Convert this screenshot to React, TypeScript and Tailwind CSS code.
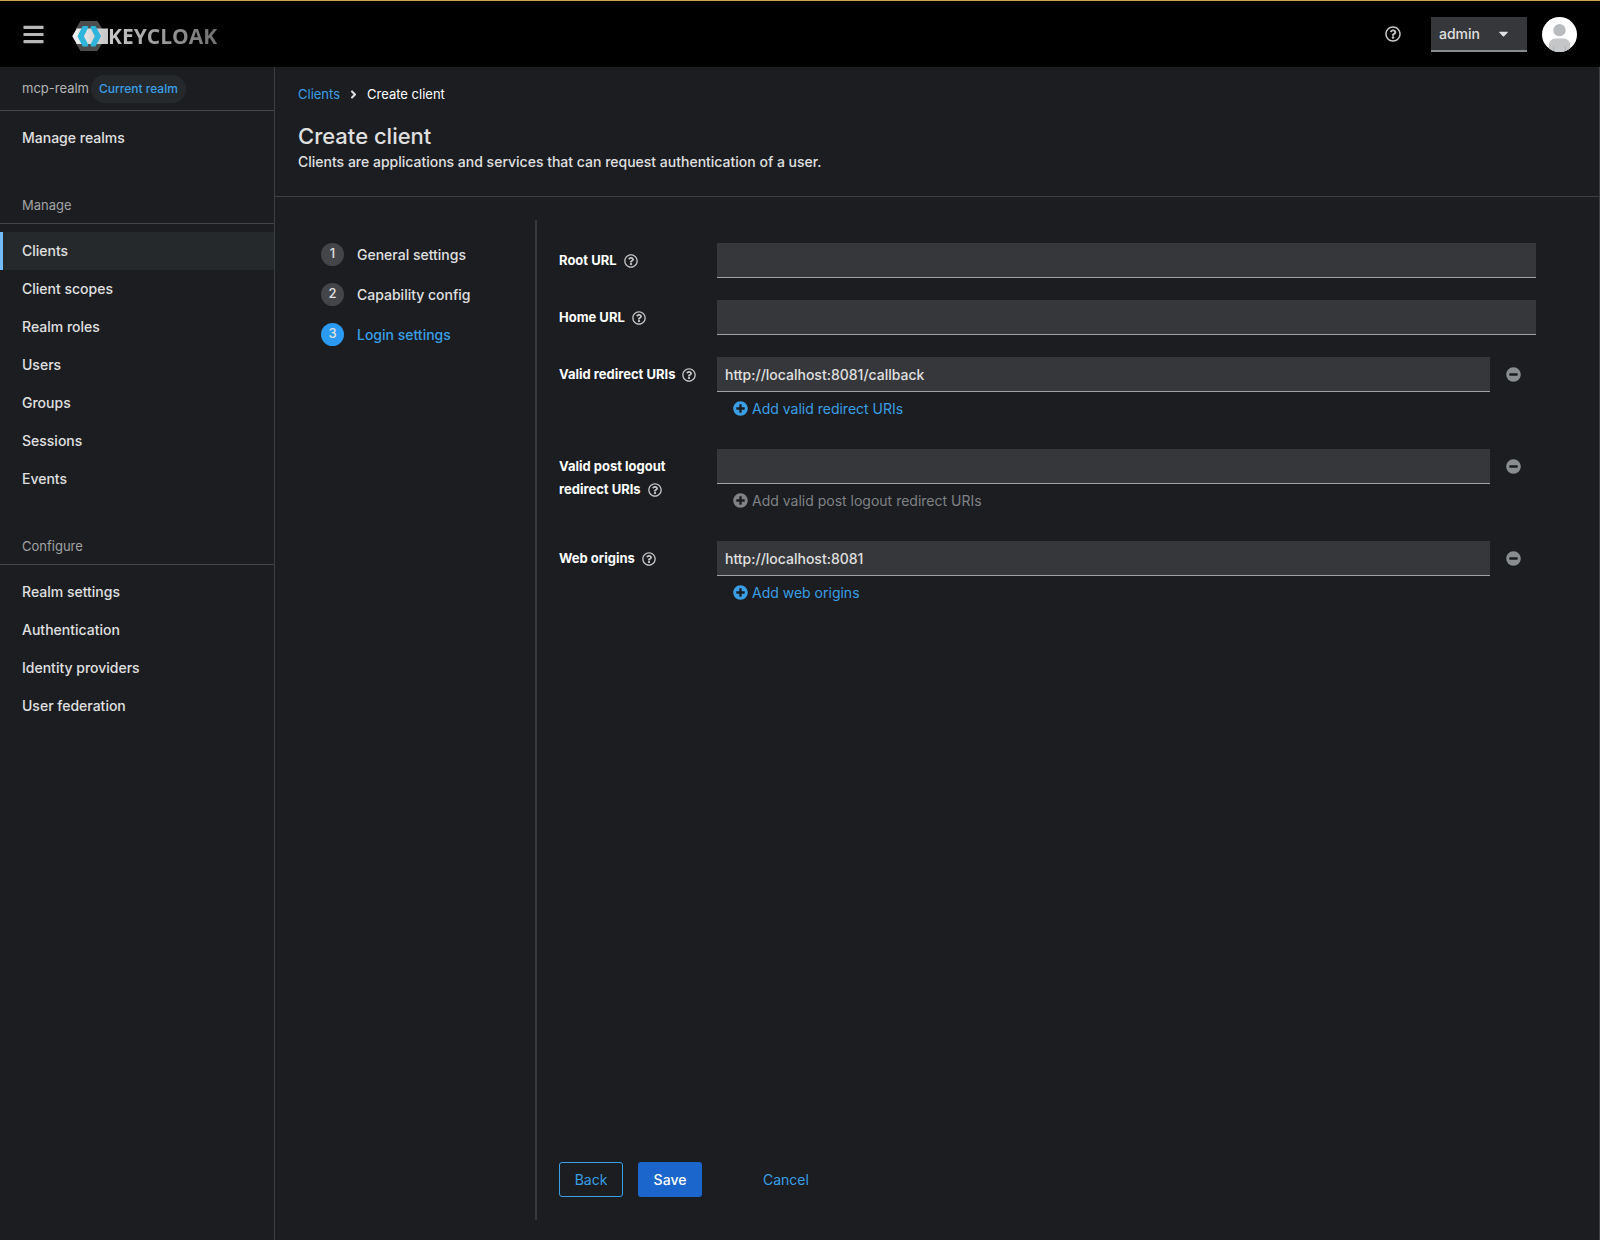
import { useState } from "react";
import {
  FaAngleRight,
  FaBars,
  FaCaretDown,
  FaMinusCircle,
  FaPlusCircle,
  FaRegQuestionCircle,
} from "react-icons/fa";

type FieldProps = {
  id: string;
  label: string;
  addLabel?: string;
  initial?: string;
};

const MANAGE_ITEMS = [
  "Clients",
  "Client scopes",
  "Realm roles",
  "Users",
  "Groups",
  "Sessions",
  "Events",
];

const CONFIGURE_ITEMS = [
  "Realm settings",
  "Authentication",
  "Identity providers",
  "User federation",
];

const STEPS = ["General settings", "Capability config", "Login settings"];

function Logo() {
  return (
    <a href="#home" className="flex items-center" aria-label="Keycloak">
      <svg width="36" height="30" viewBox="0 0 36 30" aria-hidden="true">
        <defs>
          <linearGradient id="band" x1="0" x2="1" y1="0" y2="0">
            <stop offset="0" stopColor="#f2f2f2" />
            <stop offset="1" stopColor="#c6c6c6" />
          </linearGradient>
        </defs>
        <path d="M8.5 0h17l4.5 7.5v15L25.5 30h-17L4 22.5v-15z" fill="#4d4d4d" />
        <path d="M4.7 7.5H36V23H4.7L0.3 15.2z" fill="url(#band)" />
        <path d="M10.7 5h4.8l.8 1.6-4.4 8.6 4.4 8.6-.8 1.6h-4.8L5.5 15.2z" fill="#2fb5dc" />
        <path d="M19.2 5h4.3L29 15.2l-5.5 10.2h-4.3l-.8-1.6 4.4-8.6-4.4-8.6z" fill="#2fb5dc" />
      </svg>
      <span className="bg-linear-to-r from-[#c9c9c9] to-[#6f6f6f] bg-clip-text font-['Open_Sans',sans-serif] text-[21px] leading-6 font-bold text-transparent">
        KEYCLOAK
      </span>
    </a>
  );
}

function Header() {
  return (
    <header className="flex h-[67px] shrink-0 items-center border-t border-[#c9a24e] bg-black pr-[23px] pl-[22px]">
      <button aria-label="Global navigation" className="text-[#b8b8b8]">
        <FaBars size={23} />
      </button>
      <div className="ml-[27px] pt-1">
        <Logo />
      </div>
      <div className="ml-auto flex items-center">
        <button aria-label="Help" className="text-[#c7c7c7]">
          <FaRegQuestionCircle size={16} />
        </button>
        <div className="relative ml-[30px]">
          <select
            aria-label="Account"
            className="block h-[35px] w-24 appearance-none border-b-2 border-[#8a8d90] bg-[#36373a] pt-px pl-2 text-[14px] font-medium text-[#e0e0e0]"
          >
            <option>admin</option>
          </select>
          <FaCaretDown
            size={15}
            className="pointer-events-none absolute top-[9px] right-4 text-[#e0e0e0]"
          />
        </div>
        <svg width="35" height="35" viewBox="0 0 36 36" className="ml-[15px]" aria-label="Avatar">
          <defs>
            <clipPath id="avatar">
              <circle cx="18" cy="18" r="18" />
            </clipPath>
          </defs>
          <g clipPath="url(#avatar)">
            <rect width="36" height="36" fill="#fff" />
            <circle cx="18" cy="13.5" r="6.3" fill="#b8bbbe" />
            <path d="M7 36v-7c0-4 3-7 7-7h8c4 0 7 3 7 7v7z" fill="#c4c6c8" />
            <path d="M12 30v6M24 30v6" stroke="#b0b3b6" strokeWidth="1" />
          </g>
        </svg>
      </div>
    </header>
  );
}

function NavSection({
  title,
  items,
  active,
  onSelect,
}: {
  title: string;
  items: string[];
  active: string;
  onSelect: (item: string) => void;
}) {
  return (
    <section className="mt-[38px]">
      <h2 className="border-b border-[#44474a] px-[22px] pb-2 text-[13px] leading-5 text-[#a3a3a3]">
        {title}
      </h2>
      <ul className="pt-2">
        {items.map((item) => (
          <li key={item}>
            <a
              href="#nav"
              onClick={() => onSelect(item)}
              className={
                item === active
                  ? "block h-[38px] border-l-3 border-[#73bcf7] bg-[#26292b] pl-[19px] text-[14px] leading-[38px] font-medium text-[#e0e0e0]"
                  : "block h-[38px] pl-[22px] text-[14px] leading-[38px] font-medium text-[#e0e0e0]"
              }
            >
              {item}
            </a>
          </li>
        ))}
      </ul>
    </section>
  );
}

function Sidebar() {
  const [active, setActive] = useState("Clients");

  return (
    <nav className="w-[275px] shrink-0 border-r border-[#3c3f42]">
      <div className="flex h-11 items-center gap-0.5 border-b border-[#44474a] pl-[22px]">
        <span className="text-[13px] text-[#b5b5b5]">mcp-realm</span>
        <span className="rounded-full bg-[#25292c] px-2 py-1 text-[12px] leading-5 font-medium text-[#3a9fe5]">
          Current realm
        </span>
      </div>
      <a
        href="#realms"
        className="mt-2 block h-[38px] pl-[22px] text-[14px] leading-[38px] font-medium text-[#e0e0e0]"
      >
        Manage realms
      </a>
      <NavSection title="Manage" items={MANAGE_ITEMS} active={active} onSelect={setActive} />
      <NavSection title="Configure" items={CONFIGURE_ITEMS} active={active} onSelect={setActive} />
    </nav>
  );
}

function Field({ id, label, addLabel, initial = "" }: FieldProps) {
  const [value, setValue] = useState(initial);

  return (
    <div className="flex">
      <div className="w-[158px] shrink-0 pt-[6px] pr-4 text-[13px] leading-[23px] text-white">
        <label htmlFor={id} className="font-bold">
          {label}
        </label>
        <button aria-label={`Help for ${label}`} className="ml-[7px] align-middle text-[#c7c7c7]">
          <FaRegQuestionCircle size={14} />
        </button>
      </div>
      <div className="flex-1">
        <div className="flex">
          <input
            id={id}
            type="text"
            value={value}
            onChange={(e) => setValue(e.target.value)}
            className="h-[35px] min-w-0 flex-1 border-b border-[#a0a2a4] bg-[#36373a] px-2 text-[14px] font-medium text-[#e0e0e0] outline-none"
          />
          {addLabel && (
            <button
              aria-label={`Remove ${label}`}
              className="flex w-[46px] items-center justify-center text-[#8a8d90]"
            >
              <FaMinusCircle size={15} />
            </button>
          )}
        </div>
        {addLabel && (
          <button
            disabled={value === ""}
            className="flex h-[35px] items-center gap-1 pb-0.5 pl-4 text-[14px] text-[#3a9fe5] disabled:text-[#808284]"
          >
            <FaPlusCircle size={15} />
            {addLabel}
          </button>
        )}
      </div>
    </div>
  );
}

function Wizard() {
  const current = 2;

  return (
    <div className="flex flex-1 pt-[23px] pb-5">
      <ol className="flex w-[262px] shrink-0 flex-col gap-4 border-r-2 border-[#36383b] pt-[22px] pl-[46px]">
        {STEPS.map((step, index) => (
          <li key={step}>
            <button
              className={
                index === current
                  ? "flex h-6 items-center gap-[13px] text-[14px] font-medium text-[#3a9fe5]"
                  : "flex h-6 items-center gap-[13px] text-[14px] font-medium text-[#e0e0e0]"
              }
            >
              <span
                className={
                  index === current
                    ? "flex size-[23px] items-center justify-center rounded-full bg-[#2b9af3] text-[13px] text-[#e0e0e0]"
                    : "flex size-[23px] items-center justify-center rounded-full bg-[#444548] text-[13px] text-[#e0e0e0]"
                }
              >
                {index + 1}
              </span>
              {step}
            </button>
          </li>
        ))}
      </ol>
      <div className="flex flex-1 flex-col">
        <form className="flex flex-1 flex-col gap-[22px] pt-[23px] pr-[63px] pl-[22px]">
          <Field id="root-url" label="Root URL" />
          <Field id="home-url" label="Home URL" />
          <Field
            id="redirect-uris"
            label="Valid redirect URIs"
            addLabel="Add valid redirect URIs"
            initial="http://localhost:8081/callback"
          />
          <Field
            id="logout-uris"
            label="Valid post logout redirect URIs"
            addLabel="Add valid post logout redirect URIs"
          />
          <Field
            id="web-origins"
            label="Web origins"
            addLabel="Add web origins"
            initial="http://localhost:8081"
          />
        </form>
        <footer className="flex pb-[23px] pl-[22px] text-[14px]">
          <button className="h-[35px] w-16 rounded-[3px] border border-[#3a9fe5] text-[#3a9fe5]">
            Back
          </button>
          <button className="ml-[15px] h-[35px] w-16 rounded-[3px] bg-[#1a66cc] font-medium text-white">
            Save
          </button>
          <button className="ml-[46px] h-[35px] px-[15px] text-[#3a9fe5]">Cancel</button>
        </footer>
      </div>
    </div>
  );
}

export default function App() {
  return (
    <div className="flex min-h-screen flex-col bg-[#1b1d21] font-['Inter','Liberation_Sans',sans-serif]">
      <Header />
      <div className="flex flex-1">
        <Sidebar />
        <main className="flex flex-1 flex-col border-r border-[#3c3f42]">
          <div className="border-b border-[#3c3f42] px-[23px] pt-[17px] pb-6">
            <nav aria-label="Breadcrumb" className="flex items-center text-[13px] leading-5">
              <a href="#clients" className="text-[#3a9fe5]">
                Clients
              </a>
              <FaAngleRight size={13} className="mx-[7px] text-[#e0e0e0]" />
              <span className="text-white">Create client</span>
            </nav>
            <h1 className="mt-4 text-[22px] leading-8 font-medium text-[#e0e0e0]">
              Create client
            </h1>
            <p className="text-[14px] leading-5 font-medium text-[#e0e0e0]">
              Clients are applications and services that can request authentication of a user.
            </p>
          </div>
          <Wizard />
        </main>
      </div>
    </div>
  );
}
